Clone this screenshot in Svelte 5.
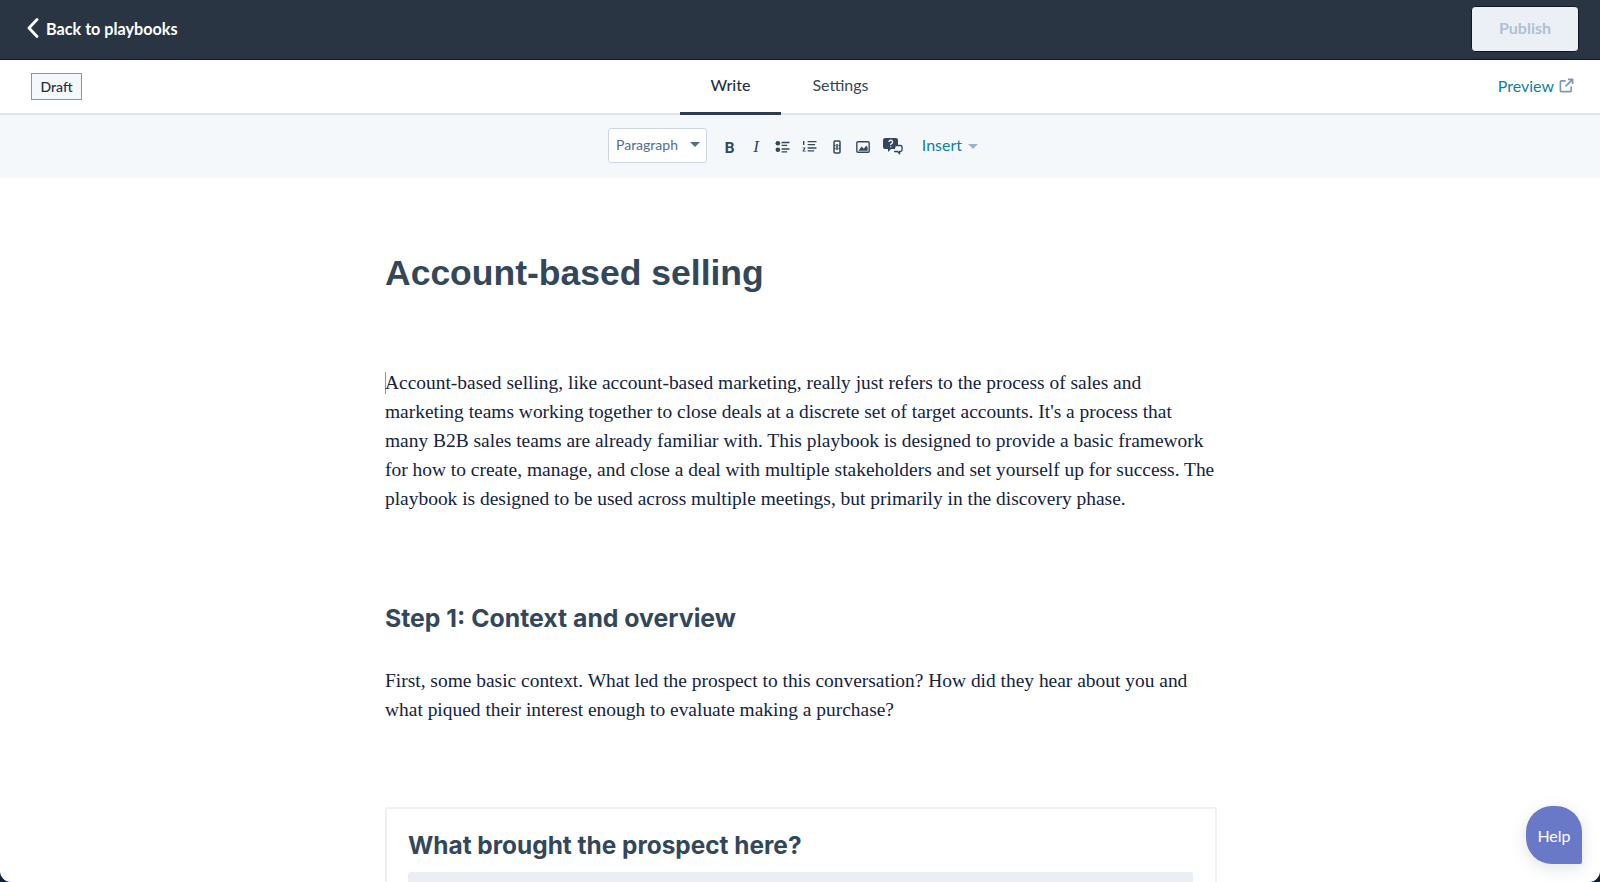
<script>
  const tabs = ['Write', 'Settings'];
  let active = 'Write';
</script>

<div class="page">
  <header class="topbar">
    <a class="back" href="#back">
      <svg viewBox="0 0 12 20" width="12" height="20"><path d="M10 1.500 2 10l8 8.500" fill="none" stroke="#fff" stroke-width="2.800" stroke-linecap="round" stroke-linejoin="round"/></svg>
      Back to playbooks
    </a>
    <button class="publish" disabled>Publish</button>
  </header>

  <nav class="tabbar">
    <span class="draft">Draft</span>
    <div class="tabs">
      {#each tabs as tab}
        <button class="tab" class:active={tab === active} on:click={() => (active = tab)}>{tab}</button>
      {/each}
    </div>
    <a class="preview" href="#preview">
      Preview
      <svg viewBox="0 0 16 16" width="15" height="15"><path d="M7 3H2.500A1 1 0 0 0 1.500 4v9.500a1 1 0 0 0 1 1H12a1 1 0 0 0 1-1V9M9.500 1.500h5v5M14.500 1.500 7 9" fill="none" stroke="#7c98b6" stroke-width="1.800"/></svg>
    </a>
  </nav>

  <div class="toolbar">
    <div class="select">Paragraph <span class="caret dark"></span></div>
    <div class="icons">
      <span class="cell b">B</span>
      <span class="cell i">I</span>
      <span class="cell"><svg viewBox="0 0 16 14" width="15" height="13"><circle cx="3" cy="3.500" r="2.500"/><circle cx="3" cy="10.500" r="2.500"/><path d="M7 2h8.500v1.500H7zM7 5h6v1.500H7zM7 9h8.500v1.500H7zM7 12h6v1.500H7z"/></svg></span>
      <span class="cell"><svg viewBox="0 0 16 14" width="15" height="13"><path d="M1 1h1.500v4.500H1zM.6 8h3v1L2 11.500h2v1H.6v-1L2.200 9H.6zM6 1h9.500v1.500H6zM6 4.200h8v1.500H6zM6 7.800h9.500v1.500H6zM6 11h7v1.500H6z"/></svg></span>
      <span class="cell"><svg viewBox="0 0 8 14" width="8" height="14"><path d="M2.500 5.500H2a1 1 0 0 1-1-1V2a1 1 0 0 1 1-1h4a1 1 0 0 1 1 1v2.500a1 1 0 0 1-1 1h-.5M2.500 8.500H2a1 1 0 0 0-1 1V12a1 1 0 0 0 1 1h4a1 1 0 0 0 1-1V9.500a1 1 0 0 0-1-1h-.5M1 5v4M7 5v4M4 4v6" fill="none" stroke="#33475b" stroke-width="1.500"/></svg></span>
      <span class="cell"><svg viewBox="0 0 15 13" width="14" height="12"><rect x=".8" y=".8" width="13.400" height="11.400" rx="1.200" fill="none" stroke="#33475b" stroke-width="1.500"/><path d="M2.500 10.500 6 6l2.500 2.500L11 5l1.500 2v3.500z"/></svg></span>
      <span class="cell qa"><svg viewBox="0 0 20 17" width="20" height="17"><path d="M2 0h11a2 2 0 0 1 2 2v7a2 2 0 0 1-2 2H8l-3 3v-3H2a2 2 0 0 1-2-2V2a2 2 0 0 1 2-2z"/><path d="M6 4a1.800 1.800 0 1 1 2.500 1.700c-.6.300-.8.600-.8 1.300M7.700 8.200v1" fill="none" stroke="#f5f8fa" stroke-width="1.300"/><path d="M13 7.500h4.500a1.500 1.500 0 0 1 1.500 1.500v3a1.500 1.500 0 0 1-1.500 1.500h-1v2l-2-2H11" fill="#f5f8fa" stroke="#33475b" stroke-width="1.300"/></svg></span>
    </div>
    <a class="insert" href="#insert">Insert <span class="caret"></span></a>
  </div>

  <main class="doc">
    <h1>Account-based selling</h1>
    <p class="first">
      <span class="cursor"></span>Account-based selling, like account-based marketing, really just refers to the process of sales and marketing teams working together to close deals at a discrete set of target accounts. It's a process that many B2B sales teams are already familiar with. This playbook is designed to provide a basic framework for how to create, manage, and close a deal with multiple stakeholders and set yourself up for success. The playbook is designed to be used across multiple meetings, but primarily in the discovery phase.
    </p>
    <h2>Step 1: Context and overview</h2>
    <p>First, some basic context. What led the prospect to this conversation? How did they hear about you and what piqued their interest enough to evaluate making a purchase?</p>
    <section class="card">
      <h3>What brought the prospect here?</h3>
      <div class="field"></div>
    </section>
  </main>

  <button class="help">Help</button>
</div>

<style>
  :global(body) {
    margin: 0;
    background: #0f2038;
  }

  .page {
    height: 882px;
    overflow: hidden;
    position: relative;
    border-radius: 0 0 11px 11px;
    background: #fff;
    font-family: Lato, "Open Sans", sans-serif;
    color: #33475b;
  }

  .topbar {
    height: 60px;
    box-sizing: border-box;
    border-bottom: 1px solid #11171e;
    background: #2a3543;
    display: flex;
    align-items: center;
    justify-content: space-between;
    padding: 0 21px 2px 27px;
  }

  .back {
    display: flex;
    align-items: center;
    gap: 7px;
    color: #fff;
    font-size: 16.200px;
    font-weight: 700;
    text-decoration: none;
    margin-bottom: 1px;
  }

  .publish {
    width: 108px;
    height: 46px;
    border: 1px solid #11171e;
    border-radius: 4px;
    background: #eaf0f6;
    color: #b0c1d4;
    font: 700 16px Lato, sans-serif;
    padding: 0 0 2px;
  }

  .tabbar {
    height: 55px;
    box-sizing: border-box;
    border-bottom: 2px solid #dfe3eb;
    display: flex;
    align-items: center;
    justify-content: space-between;
    padding: 0 27px 0 31px;
    position: relative;
  }

  .draft {
    height: 27px;
    box-sizing: border-box;
    border: 1px solid #7c98b6;
    padding: 0 8.500px;
    background: #f5f8fa;
    color: #1f2f42;
    font-size: 14px;
    font-weight: 500;
    line-height: 25px;
  }

  .tabs {
    position: absolute;
    left: 680px;
    top: 0;
    bottom: -2px;
    display: flex;
  }

  .tab {
    width: 101px;
    margin-right: 9px;
    border: 0;
    border-bottom: 3px solid transparent;
    background: none;
    color: #33475b;
    font: 400 16px Lato, sans-serif;
    padding: 0 0 3px;
  }

  .tab.active {
    border-bottom-color: #2d3e50;
    font-weight: 500;
    color: #1f2f42;
  }

  .preview {
    display: flex;
    align-items: center;
    gap: 5px;
    color: #0f7f9e;
    font-size: 16px;
    text-decoration: none;
    margin-bottom: 3px;
    margin-right: -1px;
  }

  .toolbar {
    height: 63px;
    box-sizing: border-box;
    background: #f5f8fa;
    display: flex;
    align-items: center;
    padding: 0 0 2px 608px;
  }

  .select {
    width: 99px;
    height: 35px;
    box-sizing: border-box;
    border: 1px solid #cbd6e2;
    border-radius: 3px;
    background: #fff;
    color: #516f90;
    font-size: 14px;
    display: flex;
    align-items: center;
    justify-content: space-between;
    padding: 0 6px 2px 7px;
    margin-right: 9px;
  }

  .caret {
    display: inline-block;
    width: 0;
    height: 0;
    border: 5px solid transparent;
    border-top: 5px solid #9fb3c8;
    border-bottom: 0;
    vertical-align: middle;
    margin-left: 2px;
  }

  .caret.dark {
    border-top-color: #516f90;
  }

  .icons {
    display: flex;
    align-items: center;
    fill: #33475b;
    padding-top: 2px;
  }

  .cell {
    width: 26.800px;
    display: flex;
    align-items: center;
    justify-content: center;
  }

  .qa {
    width: 30px;
    margin-left: 1px;
  }

  .b, .i {
    font-size: 15px;
    line-height: 16px;
    color: #33475b;
  }

  .b { font-weight: 900; }
  .i { font-family: "Liberation Serif", serif; font-style: italic; font-size: 17px; }

  .insert {
    margin-left: 14px;
    color: #0f7f9e;
    font-size: 16px;
    text-decoration: none;
    margin-bottom: 3px;
  }

  .doc {
    width: 832px;
    margin: 0 0 0 385px;
    color: #14233f;
    font-family: "Liberation Serif", serif;
    font-size: 19.450px;
    line-height: 29px;
  }

  h1 {
    margin: 70px 0 0;
    height: 50px;
    font: 700 35.500px/50px "Liberation Sans", sans-serif;
    color: #33475b;
  }

  p {
    margin: 0;
  }

  .first {
    margin-top: 70px;
  }

  .cursor {
    display: inline-block;
    width: 1px;
    height: 22px;
    margin-right: -1px;
    background: #8a96a8;
    vertical-align: -5px;
  }

  h2 {
    margin: 89px 0 31px;
    font: 700 24.800px/33px Inter, sans-serif;
    color: #33475b;
  }

  .card {
    margin-top: 83px;
    height: 200px;
    box-sizing: border-box;
    border: 2px solid #eef0f4;
    border-radius: 3px;
    padding: 20px 22px 20px 21px;
  }

  h3 {
    margin: 0 0 10px;
    font: 700 24.400px/33px Inter, sans-serif;
    color: #33475b;
  }

  .field {
    height: 100px;
    border-radius: 3px;
    background: #ebeff3;
  }

  .help {
    position: absolute;
    right: 18px;
    bottom: 18px;
    width: 56px;
    height: 58px;
    border: 0;
    border-radius: 26px 26px 2px 26px;
    background: #6a78c8;
    color: #fff;
    font: 400 16px Lato, sans-serif;
    box-shadow: 0 4px 16px rgba(50, 60, 90, 0.15);
  }
</style>
